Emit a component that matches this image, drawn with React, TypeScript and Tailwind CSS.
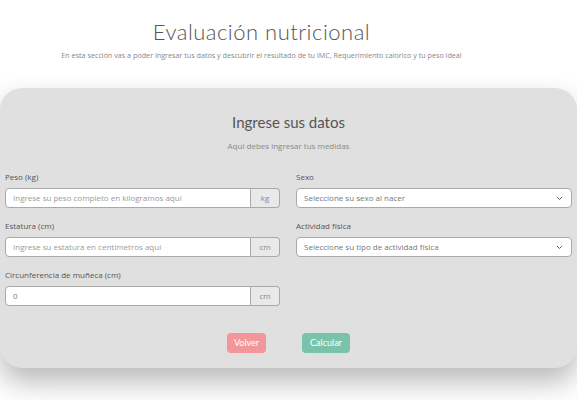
import React from "react";

const labelCls = "block text-[8px] leading-[10px] text-[#555] mb-[6px]";

const AddonInput = ({ placeholder, value, unit }: { placeholder?: string; value?: string; unit: string }) => (
  <div className="flex h-[20px] w-full">
    <div className="flex-1 flex items-center bg-white border border-[#a9a9a9] rounded-l-[4px] px-[7px] text-[8px]">
      {value ? <span className="text-[#777]">{value}</span> : <span className="text-[#9a9a9a]">{placeholder}</span>}
    </div>
    <div className="w-[29px] flex items-center justify-center bg-[#e9e9e9] border border-l-0 border-[#a9a9a9] rounded-r-[4px] text-[8px] text-[#888]">
      {unit}
    </div>
  </div>
);

const SelectBox = ({ placeholder }: { placeholder: string }) => (
  <div className="flex h-[20px] w-full items-center justify-between bg-white border border-[#a9a9a9] rounded-[4px] pl-[7px] pr-[8px] text-[8px] text-[#777]">
    <span>{placeholder}</span>
    <svg width="7" height="5" viewBox="0 0 7 5" fill="none" stroke="#666" strokeWidth="1">
      <path d="M1 1l2.5 2.5L6 1" />
    </svg>
  </div>
);

export default function App() {
  return (
    <div className="w-[577px] h-[400px] overflow-hidden bg-white" style={{ fontFamily: '"Open Sans", sans-serif' }}>
      <div className="pt-[17px] pr-[54px] text-center">
        <h1 className="text-[22px] leading-[30px] text-[#555] font-light tracking-[0.5px]" style={{ fontFamily: '"Lato", sans-serif' }}>
          Evaluación nutricional
        </h1>
        <p className="mt-[2px] text-[7.2px] leading-[12px] text-[#888]">
          En esta sección vas a poder ingresar tus datos y descubrir el resultado de tu IMC, Requerimiento calorico y tu peso ideal
        </p>
      </div>
      <div className="mt-[27px] bg-[#e0e0e0] rounded-[22px] shadow-[0_14px_28px_rgba(0,0,0,0.28)] px-[5px] pt-[24px] pb-[15px]">
        <h2 className="text-center text-[15px] leading-[20px] text-[#555]" style={{ fontFamily: '"Lato", sans-serif' }}>
          Ingrese sus datos
        </h2>
        <p className="mt-[9px] text-center text-[8px] leading-[10px] text-[#888]">Aqui debes ingresar tus medidas</p>
        <div className="mt-[21px] grid grid-cols-[275px_276px] gap-x-[16px] gap-y-[13px]">
          <div>
            <label className={labelCls}>Peso (kg)</label>
            <AddonInput placeholder="Ingrese su peso completo en kilogramos aquí" unit="kg" />
          </div>
          <div>
            <label className={labelCls}>Sexo</label>
            <SelectBox placeholder="Seleccione su sexo al nacer" />
          </div>
          <div>
            <label className={labelCls}>Estatura (cm)</label>
            <AddonInput placeholder="Ingrese su estatura en centímetros aquí" unit="cm" />
          </div>
          <div>
            <label className={labelCls}>Actividad física</label>
            <SelectBox placeholder="Seleccione su tipo de actividad física" />
          </div>
          <div>
            <label className={labelCls}>Circunferencia de muñeca (cm)</label>
            <AddonInput value="0" unit="cm" />
          </div>
        </div>
        <div className="mt-[27px] flex justify-center gap-[36px]">
          <button className="h-[20px] w-[39px] rounded-[4px] bg-[#f29699] text-white text-[9px]" style={{ fontFamily: '"Lato", sans-serif' }}>
            Volver
          </button>
          <button className="h-[20px] w-[48px] rounded-[4px] bg-[#79c3ab] text-white text-[9px]" style={{ fontFamily: '"Lato", sans-serif' }}>
            Calcular
          </button>
        </div>
      </div>
    </div>
  );
}
